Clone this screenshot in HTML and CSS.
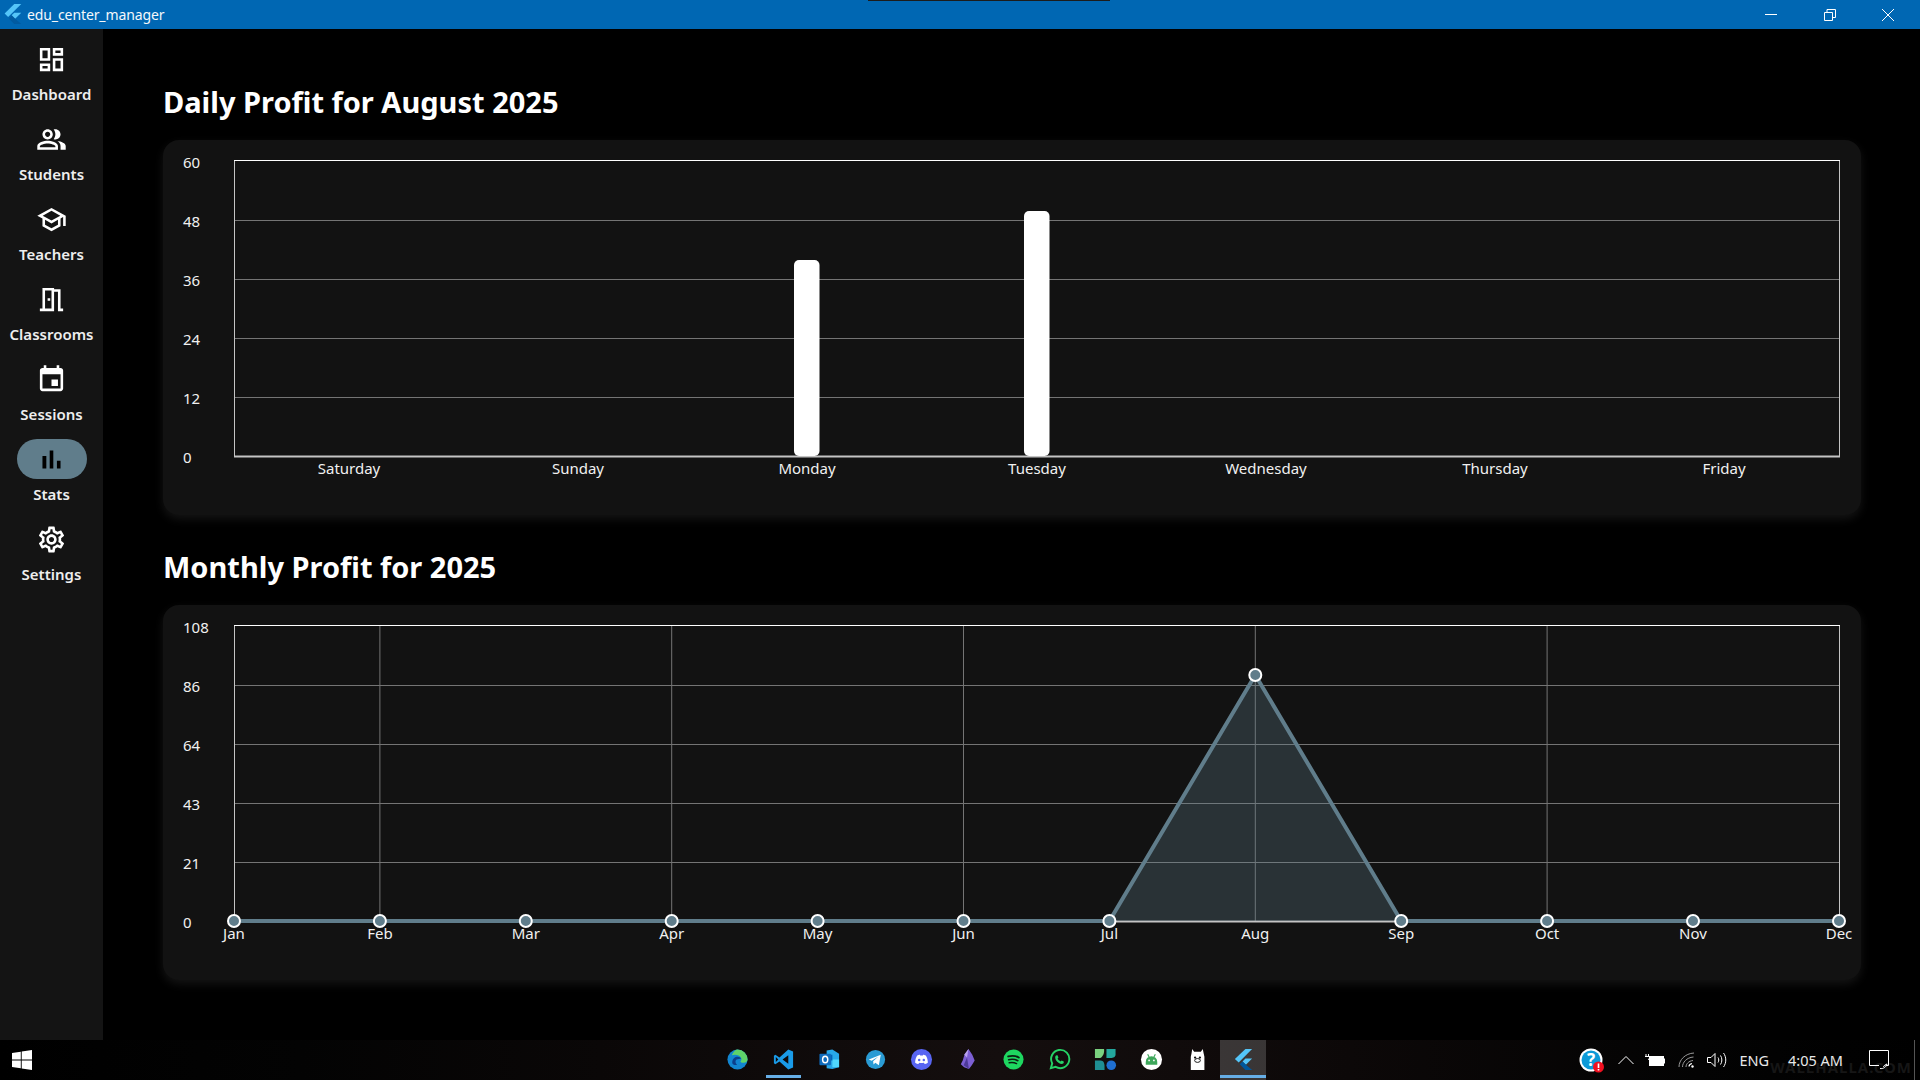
FILE: index.html
```html
<!DOCTYPE html>
<html lang="en">
<head>
    <meta charset="UTF-8">
    <title>edu_center_manager</title>
    <link rel="stylesheet" href="styles.css">
</head>
<body>
<div class="window">
    <header class="titlebar">
        <svg class="app-logo" viewBox="0 0 24 24"><path fill="#54c5f8" d="M14 1h8L7 16l-4-4z"/><path fill="#54c5f8" d="M14 11h8l-7 7-4-4z"/><path fill="#01579b" d="M11 14l4 4 7 6h-8l-6-6z" opacity=".75"/></svg>
        <span class="app-name">edu_center_manager</span>
        <div class="window-controls">
            <svg viewBox="0 0 12 12"><path d="M0 5.500h12" stroke="#fff" fill="none"/></svg>
            <svg viewBox="0 0 12 12"><path d="M.5 3.500h8v8h-8zM3 3.500V.5h8.500v8h-3" stroke="#fff" fill="none"/></svg>
            <svg viewBox="0 0 12 12"><path d="M0 0l12 12M12 0L0 12" stroke="#fff" fill="none"/></svg>
        </div>
    </header>

    <div class="app-body">
        <nav class="sidebar">
            <a class="nav-item">
                <span class="nav-icon"><svg viewBox="0 0 24 24"><path d="M19 5v2h-4V5h4M9 5v6H5V5h4m10 8v6h-4v-6h4M9 17v2H5v-2h4M21 3h-8v6h8V3zM11 3H3v10h8V3zm10 8h-8v10h8V11zm-10 4H3v6h8v-6z"/></svg></span>
                <span class="nav-label">Dashboard</span>
            </a>
            <a class="nav-item">
                <span class="nav-icon"><svg viewBox="0 0 24 24"><path d="M16.670 13.130C18.040 14.060 19 15.320 19 17v3h4v-3c0-2.180-3.570-3.470-6.330-3.870z"/><path d="M15 12c2.210 0 4-1.790 4-4s-1.790-4-4-4c-.47 0-.91.1-1.330.24C14.500 5.270 15 6.580 15 8s-.5 2.730-1.330 3.760c.42.14.86.24 1.330.24z"/><path d="M9 12c2.210 0 4-1.790 4-4s-1.790-4-4-4-4 1.790-4 4 1.790 4 4 4zm0-6c1.100 0 2 .9 2 2s-.9 2-2 2-2-.9-2-2 .9-2 2-2z"/><path d="M9 13c-2.670 0-8 1.340-8 4v3h16v-3c0-2.660-5.330-4-8-4zm6 5H3v-.99C3.200 16.290 6.300 15 9 15s5.800 1.290 6 2V18z"/></svg></span>
                <span class="nav-label">Students</span>
            </a>
            <a class="nav-item">
                <span class="nav-icon"><svg viewBox="0 0 24 24"><path d="M12 3L1 9l4 2.180v6L12 21l7-3.820v-6l2-1.090V17h2V9L12 3zm6.820 6L12 12.720 5.180 9 12 5.280 18.820 9zM17 15.990l-5 2.730-5-2.730v-3.720L12 15l5-2.730v3.720z"/></svg></span>
                <span class="nav-label">Teachers</span>
            </a>
            <a class="nav-item">
                <span class="nav-icon"><svg viewBox="0 0 24 24"><path fill-rule="evenodd" d="M14 6v15H3v-2h2V3h9v1h5v15h2v2h-4V6h-3zM7 5v14h5V5H7zM9 11h2v2H9z"/></svg></span>
                <span class="nav-label">Classrooms</span>
            </a>
            <a class="nav-item">
                <span class="nav-icon"><svg viewBox="0 0 24 24"><path d="M17 12h-5v5h5v-5zM16 1v2H8V1H6v2H5c-1.110 0-1.990.9-1.990 2L3 19c0 1.100.89 2 2 2h14c1.100 0 2-.9 2-2V5c0-1.100-.9-2-2-2h-1V1h-2zm3 18H5V8h14v11z"/></svg></span>
                <span class="nav-label">Sessions</span>
            </a>
            <a class="nav-item active">
                <span class="nav-icon"><svg viewBox="0 0 24 24"><path d="M5 9.200h3V19H5zM10.600 5h2.800v14h-2.800zm5.600 8H19v6h-2.800z"/></svg></span>
                <span class="nav-label">Stats</span>
            </a>
            <a class="nav-item">
                <span class="nav-icon"><svg viewBox="0 0 24 24"><path d="M19.430 12.980c.04-.32.07-.64.07-.98 0-.34-.03-.66-.07-.98l2.110-1.650c.19-.15.24-.42.12-.64l-2-3.460c-.09-.16-.26-.25-.44-.25-.06 0-.12.01-.17.03l-2.490 1c-.52-.4-1.080-.73-1.690-.98l-.38-2.650C14.460 2.180 14.250 2 14 2h-4c-.25 0-.46.18-.49.42l-.38 2.650c-.61.25-1.170.59-1.690.98l-2.490-1c-.06-.02-.12-.03-.18-.03-.17 0-.34.09-.43.25l-2 3.460c-.13.22-.07.49.12.64l2.110 1.650c-.04.32-.07.65-.07.98 0 .33.03.66.07.98l-2.110 1.650c-.19.15-.24.42-.12.64l2 3.460c.09.16.26.25.44.25.06 0 .12-.01.17-.03l2.490-1c.52.4 1.080.73 1.690.98l.38 2.650c.03.24.24.42.49.42h4c.25 0 .46-.18.49-.42l.38-2.650c.61-.25 1.170-.59 1.690-.98l2.490 1c.06.02.12.03.18.03.17 0 .34-.09.43-.25l2-3.460c.12-.22.07-.49-.12-.64l-2.110-1.650zm-1.980-1.710c.04.31.05.52.05.73 0 .21-.02.43-.05.73l-.14 1.130.89.7 1.080.84-.7 1.210-1.270-.51-1.040-.42-.9.68c-.43.32-.84.56-1.250.73l-1.060.43-.16 1.130-.2 1.350h-1.400l-.19-1.350-.16-1.130-1.060-.43c-.43-.18-.83-.41-1.230-.71l-.91-.7-1.060.43-1.270.51-.7-1.210 1.080-.84.89-.7-.14-1.130c-.03-.31-.05-.54-.05-.74s.02-.43.05-.73l.14-1.130-.89-.7-1.080-.84.7-1.210 1.270.51 1.040.42.9-.68c.43-.32.84-.56 1.250-.73l1.060-.43.16-1.130.2-1.350h1.390l.19 1.350.16 1.130 1.060.43c.43.18.83.41 1.230.71l.91.7 1.060-.43 1.270-.51.7 1.210-1.070.85-.89.7.14 1.130zM12 8c-2.210 0-4 1.790-4 4s1.790 4 4 4 4-1.790 4-4-1.790-4-4-4zm0 6c-1.100 0-2-.9-2-2s.9-2 2-2 2 .9 2 2-.9 2-2 2z"/></svg></span>
                <span class="nav-label">Settings</span>
            </a>
        </nav>

        <main class="content">
            <h2 class="chart-title">Daily Profit for August 2025</h2>
            <section class="chart-card">
                <svg class="chart" viewBox="-1 0 1698 375">
                    <g class="grid">
                        <path d="M70 80.500H1675M70 139.500H1675M70 198.500H1675M70 257.500H1675"/>
                    </g>
                    <path class="axis" d="M70.500 20.500V316"/>
                    <path class="axis" d="M1675.500 20.500V316"/>
                    <path class="axis-top" d="M70 20.500H1676"/>
                    <path class="axis-bottom" d="M70 316.500H1676"/>
                    <rect class="bar" x="630" y="120" width="25.500" height="196" rx="5"/>
                    <rect class="bar" x="860" y="71" width="25.500" height="245" rx="5"/>
                    <g class="y-labels">
                        <text x="19" y="28">60</text>
                        <text x="19" y="87">48</text>
                        <text x="19" y="146">36</text>
                        <text x="19" y="205">24</text>
                        <text x="19" y="264">12</text>
                        <text x="19" y="323">0</text>
                    </g>
                    <g class="x-labels">
                        <text x="185" y="334">Saturday</text>
                        <text x="414" y="334">Sunday</text>
                        <text x="643" y="334">Monday</text>
                        <text x="873" y="334">Tuesday</text>
                        <text x="1102" y="334">Wednesday</text>
                        <text x="1331" y="334">Thursday</text>
                        <text x="1560" y="334">Friday</text>
                    </g>
                </svg>
            </section>

            <h2 class="chart-title second">Monthly Profit for 2025</h2>
            <section class="chart-card">
                <svg class="chart" viewBox="-1 0 1698 375">
                    <g class="grid">
                        <path d="M70 80.500H1675M70 139.500H1675M70 198.500H1675M70 257.500H1675"/>
                        <path d="M215.900 21V316M507.700 21V316M799.500 21V316M1091.300 21V316M1383.100 21V316"/>
                    </g>
                    <path class="axis" d="M70.500 20.500V316"/>
                    <path class="axis" d="M1675.500 20.500V316"/>
                    <path class="axis-top" d="M70 20.500H1676"/>
                    <path class="axis-bottom" d="M70 316.500H1676"/>
                    <path class="area" d="M945.400 316L1091.300 70L1237.200 316Z"/>
                    <path class="line" d="M70 316H945.400L1091.300 70L1237.200 316H1675"/>
                    <g class="dots">
                        <circle cx="70" cy="316" r="6"/>
                        <circle cx="215.900" cy="316" r="6"/>
                        <circle cx="361.800" cy="316" r="6"/>
                        <circle cx="507.700" cy="316" r="6"/>
                        <circle cx="653.600" cy="316" r="6"/>
                        <circle cx="799.500" cy="316" r="6"/>
                        <circle cx="945.400" cy="316" r="6"/>
                        <circle cx="1091.300" cy="70" r="6"/>
                        <circle cx="1237.200" cy="316" r="6"/>
                        <circle cx="1383.100" cy="316" r="6"/>
                        <circle cx="1529" cy="316" r="6"/>
                        <circle cx="1675" cy="316" r="6"/>
                    </g>
                    <g class="y-labels">
                        <text x="19" y="28">108</text>
                        <text x="19" y="87">86</text>
                        <text x="19" y="146">64</text>
                        <text x="19" y="205">43</text>
                        <text x="19" y="264">21</text>
                        <text x="19" y="323">0</text>
                    </g>
                    <g class="x-labels">
                        <text x="70" y="334">Jan</text>
                        <text x="215.900" y="334">Feb</text>
                        <text x="361.800" y="334">Mar</text>
                        <text x="507.700" y="334">Apr</text>
                        <text x="653.600" y="334">May</text>
                        <text x="799.500" y="334">Jun</text>
                        <text x="945.400" y="334">Jul</text>
                        <text x="1091.300" y="334">Aug</text>
                        <text x="1237.200" y="334">Sep</text>
                        <text x="1383.100" y="334">Oct</text>
                        <text x="1529" y="334">Nov</text>
                        <text x="1675" y="334">Dec</text>
                    </g>
                </svg>
            </section>
        </main>
    </div>

    <footer class="taskbar">
        <div class="start">
            <svg viewBox="0 0 20 20"><path fill="#fff" d="M0 3l8.800-1.200v7.700H0zM9.700 1.600L20 0v9.500H9.700zM0 10.500h8.800v7.700L0 17zM9.700 10.500H20V20L9.700 18.400z"/></svg>
        </div>
        <div class="task-icons">
            <span class="task"><svg viewBox="0 0 24 24"><circle cx="12" cy="12" r="10.500" fill="#1285d0"/><path fill="#5ed36a" d="M12 1.500A10.500 10.500 0 0 1 22.500 12c0 2-1.600 3.400-4 3.400-2 0-3.400-.7-3.400-1.700 1-1 1.400-2 .6-3.600C14.400 7.600 10 6 6 7.500 8 3.500 10 1.500 12 1.500z"/><path fill="#0b3f8c" d="M6.500 15c0-4 3-6 5.500-6 1.800 0 3.300 1 3.700 2.100-1 .1-3.200 0-4.700 1-1.600 1.100-1.500 3.700.6 5.600-2.900.3-5.100-.7-5.100-2.700z"/></svg></span>
            <span class="task open"><svg viewBox="0 0 24 24"><path fill="#1a9be8" fill-rule="evenodd" d="M17 1.500l5 2.200v16.600l-5 2.200-9.200-8.400L3.500 17 2 16V8l1.500-1 4.300 2.900zM17 7.500L11 12l6 4.500zM4 9.500v5L6.600 12z"/></svg></span>
            <span class="task"><svg viewBox="0 0 24 24"><path fill="#28a8ea" d="M9 2.500l6-1 7 4.500v14l-7 2-6-1z"/><path fill="#50d9ff" d="M15 12h7v8h-7z"/><path fill="#0364b8" d="M9 7h6v6H9z"/><rect x="1.500" y="6" width="12" height="12" rx="1" fill="#0f6cbd"/><ellipse cx="7.500" cy="12" rx="2.700" ry="3.400" fill="none" stroke="#fff" stroke-width="1.500"/></svg></span>
            <span class="task"><svg viewBox="0 0 24 24"><circle cx="12" cy="12" r="10" fill="#2a9bd4"/><path fill="#fff" d="M5 12l12.500-5-2 11-3.700-2.700-1.800 1.800-.5-3.200 5.500-5-7 4.300z"/></svg></span>
            <span class="task"><svg viewBox="0 0 24 24"><circle cx="12" cy="12" r="11" fill="#5865f2"/><path fill="#fff" d="M7.500 7.800C9 7 10 6.900 10.300 7l.3.700h2.800l.3-.7c.3-.1 1.300 0 2.800.8 1.500 2.500 2.200 5 2.100 7.500-1.200.9-2.400 1.400-3.300 1.500l-.8-1.300-.2-.2c-1.500.4-3 .4-4.600 0l-1 1.500c-.9-.1-2.100-.6-3.300-1.500-.1-2.500.6-5 2.100-7.500z"/><circle cx="9.600" cy="12.500" r="1.300" fill="#5865f2"/><circle cx="14.400" cy="12.500" r="1.300" fill="#5865f2"/></svg></span>
            <span class="task"><svg viewBox="0 0 24 24"><path fill="#7c5fd3" d="M13 1l4 6 2.500 6-3 5-3 4-5-2-3.500-3 2-4 1.500-5z"/><path fill="#b9a2f0" d="M13 1l-1.500 9-3-3z"/><path fill="#4d3a99" d="M11.500 10L8 18l5.500 4z"/></svg></span>
            <span class="task"><svg viewBox="0 0 24 24"><circle cx="12" cy="12" r="10.500" fill="#1ed760"/><path fill="none" stroke="#0b1f12" stroke-width="2" stroke-linecap="round" d="M6.500 8.800c3.800-1 7.800-.7 11 1.100"/><path fill="none" stroke="#0b1f12" stroke-width="1.700" stroke-linecap="round" d="M7 12.200c3.300-.8 6.500-.5 9.500 1"/><path fill="none" stroke="#0b1f12" stroke-width="1.500" stroke-linecap="round" d="M7.500 15.400c2.700-.6 5.300-.4 7.700.9"/></svg></span>
            <span class="task"><svg viewBox="0 0 24 24"><path fill="none" stroke="#25d366" stroke-width="2" d="M3 21l1.400-5A9.500 9.500 0 1 1 8 19.700z"/><path fill="#25d366" d="M9 7.500c-.5 0-1.500.8-1.500 2.300 0 3 3.500 6.500 6.700 6.800 1.500 0 2.300-1 2.300-1.800l-.1-.8-2.200-1-.9 1c-1.600-.6-2.700-1.700-3.300-3l.9-1-1-2.400z"/></svg></span>
            <span class="task"><svg viewBox="0 0 24 24"><path fill="#7ad17f" d="M1 1h9.500c.5 4-1 8-4 9.500H1z"/><path fill="#23a79d" d="M13 1h9.500V7c0 2-2.500 3.500-5 3.500H13z"/><path fill="#1f8e93" d="M1 13h6c3 0 4 3 4 6v4H1z"/><circle cx="18" cy="18" r="5" fill="#1f6fd1"/></svg></span>
            <span class="task"><svg viewBox="0 0 24 24"><circle cx="12" cy="12" r="11" fill="#fff"/><path fill="#3ea75b" d="M6 14.500a6 6 0 0 1 12 0v3H6z"/><path stroke="#3ea75b" stroke-width="1.200" d="M8 6.500l1.500 3M16 6.500l-1.500 3"/><circle cx="9.500" cy="13" r=".9" fill="#fff"/><circle cx="14.500" cy="13" r=".9" fill="#fff"/></svg></span>
            <span class="task"><svg viewBox="0 0 24 24"><path fill="#fff" d="M6.500 1l2 3h7l2-3 1 5 .7 3v14H5V9l.7-3z"/><circle cx="9.500" cy="10" r="1.200" fill="#111"/><circle cx="14.500" cy="10" r="1.200" fill="#111"/><ellipse cx="12" cy="13" rx="3" ry="2" fill="none" stroke="#111"/></svg></span>
            <span class="task current"><svg viewBox="0 0 24 24"><path fill="#54c5f8" d="M14 1h7L7 15l-4-3.500z"/><path fill="#54c5f8" d="M14 11h7l-6.500 6.500L11 14z"/><path fill="#01579b" d="M11 14l3.500 3.500L21 23h-7l-6-6z"/></svg></span>
        </div>
        <div class="tray">
            <svg class="help" viewBox="0 0 26 26"><circle cx="13" cy="13" r="11.500" fill="#fff"/><circle cx="13" cy="13" r="9.500" fill="#0b9ad8"/><text x="13" y="19" class="help-mark">?</text><circle cx="20.500" cy="20" r="5.500" fill="#f01020"/><rect x="19.700" y="16.500" width="1.600" height="4.500" fill="#fff"/><rect x="19.700" y="22" width="1.600" height="1.500" fill="#fff"/></svg>
            <svg class="chevron" viewBox="0 0 16 10"><path d="M.5 9L8 1.500 15.500 9" fill="none" stroke="#fff" stroke-width="1"/></svg>
            <svg class="battery" viewBox="0 0 20 12"><path d="M1 0V2.500M3.500 0V2.500M0 2.500h4.500v1.500a1.500 1.500 0 0 1-1.500 1.500" stroke="#fff" fill="none"/><rect x="4.500" y="2.500" width="14" height="9" fill="#fff" stroke="#fff"/><rect x="19" y="4.500" width="1" height="5" fill="#fff"/></svg>
            <svg class="wifi" viewBox="0 0 18 16"><path d="M1 15C1 8 7 1.500 16 1M4.500 15c0-4.500 4-9.500 11-10M8 15c0-3 2.500-6 7-6.500" fill="none" stroke="#999" stroke-width="1"/><path d="M11 14.500c0-1.500 1-2.500 3-3" fill="none" stroke="#fff" stroke-width="1.200"/><circle cx="14.500" cy="14.500" r="1.200" fill="#fff"/></svg>
            <svg class="volume" viewBox="0 0 20 16"><path d="M.5 5.500H4L8 1.500v13l-4-4H.5z" fill="none" stroke="#fff"/><path d="M11 5.500c1 1.500 1 3.500 0 5M13.500 3.500c1.800 2.500 1.800 6.500 0 9M16.500 1c3 4 3 10 0 14" fill="none" stroke="#fff"/></svg>
            <span class="tray-text lang">ENG</span>
            <span class="tray-text clock">4:05 AM</span>
            <svg class="notify" viewBox="0 0 20 20"><path d="M.5.5h19v15h-3M10 15.500H.5V.5" fill="none" stroke="#fff"/><path d="M11 18.500c3 .5 6-1 7-4.500-2 .5-3 1.500-3.500 3" fill="none" stroke="#fff"/></svg>
            <span class="show-desktop"></span>
        </div>
        <span class="watermark">WALLHALLA.COM</span>
    </footer>
</div>
</body>
</html>
```

FILE: styles.css
```css
* {
    margin: 0;
    padding: 0;
    box-sizing: border-box;
}

body {
    background: #000000;
    font-family: "Noto Sans", "Open Sans", sans-serif;
    color: #ffffff;
    overflow: hidden;
}

.window {
    height: 100vh;
    display: flex;
    flex-direction: column;
}

/* title bar */
.titlebar {
    height: 29px;
    flex: none;
    background: #0067b3;
    display: flex;
    align-items: center;
    padding-left: 2px;
    position: relative;
}

.titlebar::after {
    content: "";
    position: absolute;
    left: 868px;
    top: 0;
    width: 242px;
    height: 1px;
    background: #1c1c1c;
}

.app-logo {
    width: 21px;
    height: 21px;
    margin-top: -3px;
}

.app-name {
    font-size: 14px;
    letter-spacing: -0.1px;
    margin-left: 4px;
    color: #f4f8fb;
}

.window-controls {
    margin-left: auto;
    display: flex;
    align-items: center;
    gap: 46.500px;
    padding-right: 26px;
}

.window-controls svg {
    width: 12px;
    height: 12px;
}

/* sidebar */
.app-body {
    flex: 1;
    display: flex;
    min-height: 0;
}

.sidebar {
    width: 103px;
    flex: none;
    background: #141414;
    display: flex;
    flex-direction: column;
    align-items: center;
    padding-top: 10px;
}

.nav-item {
    height: 80px;
    display: flex;
    flex-direction: column;
    align-items: center;
}

.nav-icon {
    width: 70px;
    height: 40px;
    border-radius: 20px;
    display: flex;
    align-items: center;
    justify-content: center;
}

.nav-icon svg {
    width: 31px;
    height: 31px;
    fill: #ffffff;
}

.nav-item.active .nav-icon {
    background: #607d8b;
}

.nav-item.active .nav-icon svg {
    fill: #000000;
}

.nav-label {
    margin-top: 5px;
    font-size: 15px;
    line-height: 20px;
    font-weight: 600;
    color: #eeeeee;
}

/* main area */
.content {
    flex: 1;
    min-width: 0;
    padding: 53px 59px 0 60px;
}

.chart-title {
    font-size: 29px;
    line-height: 40px;
    font-weight: 700;
    margin-bottom: 18px;
}

.chart-title.second {
    margin-top: 32px;
}

.chart-card {
    height: 375px;
    background: #121212;
    border-radius: 16px;
    box-shadow: 0 4px 10px rgba(255, 255, 255, 0.08);
}

.chart {
    display: block;
    width: 100%;
    height: 100%;
}

.chart text {
    font-size: 15px;
    fill: #f0f0f0;
}

.x-labels text {
    text-anchor: middle;
}

.grid path {
    stroke: #747474;
    stroke-width: 1;
    fill: none;
}

.axis {
    stroke: #c4c4c4;
    stroke-width: 1;
    fill: none;
}

.axis-top {
    stroke: #ffffff;
    stroke-width: 1;
    fill: none;
}

.axis-bottom {
    stroke: #c4c4c4;
    stroke-width: 2;
    fill: none;
}

.bar {
    fill: #ffffff;
}

.area {
    fill: rgba(96, 125, 139, 0.3);
}

.line {
    fill: none;
    stroke: #607d8b;
    stroke-width: 4;
    stroke-linejoin: round;
}

.dots circle {
    fill: #607d8b;
    stroke: #ffffff;
    stroke-width: 2;
}

/* taskbar */
.taskbar {
    height: 40px;
    flex: none;
    position: relative;
    display: flex;
    align-items: center;
    background: linear-gradient(90deg, #000000 0, #030303 300px, #0a0707 600px, #140e0e 1000px, #0c0808 1350px, #030303 1700px, #000000 100%);
}

.start {
    width: 44px;
    display: flex;
    justify-content: center;
}

.start svg {
    width: 20px;
    height: 20px;
}

.task-icons {
    display: flex;
    margin-left: 670px;
    height: 100%;
}

.task {
    width: 46px;
    height: 100%;
    display: flex;
    align-items: center;
    justify-content: center;
    position: relative;
}

.task svg {
    width: 23px;
    height: 23px;
    margin-top: -2px;
}

.task.open::after,
.task.current::after {
    content: "";
    position: absolute;
    left: 6px;
    right: 5px;
    bottom: 2px;
    height: 3px;
    background: #66aee6;
}

.task.current {
    background: rgba(255, 255, 255, 0.18);
}

.task.current::after {
    left: 0;
    right: 0;
}

.tray {
    position: relative;
    z-index: 1;
    margin-left: auto;
    display: flex;
    align-items: center;
    height: 100%;
    color: #ffffff;
}

.tray svg {
    display: block;
}

.help {
    width: 26px;
    height: 26px;
    margin-right: 14px;
}

.help-mark {
    font-size: 17px;
    font-weight: 700;
    fill: #ffffff;
    text-anchor: middle;
}

.chevron {
    width: 16px;
    height: 10px;
    margin-right: 11px;
}

.battery {
    width: 20px;
    height: 12px;
    margin-right: 13px;
}

.wifi {
    width: 18px;
    height: 16px;
    margin-right: 11px;
}

.volume {
    width: 20px;
    height: 16px;
    margin-right: 12px;
}

.tray-text {
    font-size: 14.500px;
    color: #e8e8e8;
}

.lang {
    margin-right: 19px;
}

.clock {
    margin-right: 26px;
}

.notify {
    width: 20px;
    height: 20px;
    margin-right: 25px;
}

.show-desktop {
    width: 1px;
    height: 100%;
    background: #555555;
    margin-right: 5px;
}

.watermark {
    position: absolute;
    right: 8px;
    top: 17px;
    font-size: 15px;
    font-weight: 700;
    letter-spacing: 1px;
    color: #161616;
}
```
